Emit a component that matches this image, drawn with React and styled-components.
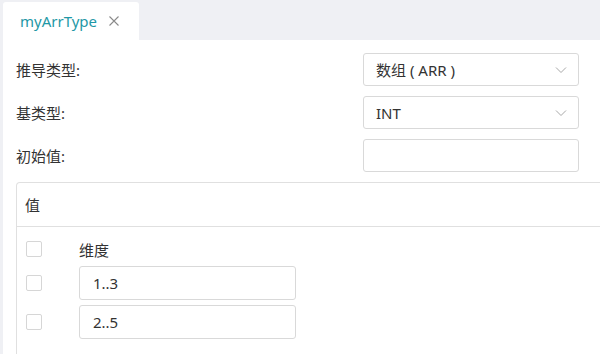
import React from 'react'
import styled, { createGlobalStyle } from 'styled-components'

const GlobalStyle = createGlobalStyle`
	html, body {
		margin: 0;
		padding: 0;
		background: #ffffff;
	}
	body {
		font-family: 'Noto Sans', 'Noto Sans CJK SC', sans-serif;
		color: #333333;
	}
`

const Page = styled.div`
	display: flex;
	width: 600px;
	height: 354px;
	overflow: hidden;
	background: #eff0f4;
`

const Main = styled.div`
	flex: 1;
	margin-left: 3px;
	display: flex;
	flex-direction: column;
	min-width: 0;
`

const TabBar = styled.div`
	height: 40px;
	display: flex;
	align-items: flex-end;
	background: #eff0f4;
`

const Tab = styled.div`
	width: 136px;
	height: 38px;
	box-sizing: border-box;
	background: #ffffff;
	border-radius: 3px 3px 0 0;
	display: flex;
	align-items: center;
	padding-left: 17px;
	gap: 12px;
	font-size: 15px;
	color: #1f98a6;
	padding-bottom: 1px;
`

const CloseButton = styled.span`
	display: flex;
	align-items: center;
	color: #8a8a8a;
`

const Content = styled.div`
	flex: 1;
	background: #ffffff;
	padding: 13px 0 0 13px;
	display: flex;
	flex-direction: column;
	gap: 10px;
`

const FieldRow = styled.div`
	display: flex;
	align-items: center;
	justify-content: space-between;
	padding-right: 21px;
	height: 33px;
`

const Label = styled.span`
	font-size: 15px;
	color: #333333;
`

const Field = styled.div`
	width: 216px;
	height: 33px;
	box-sizing: border-box;
	border: 1px solid #d9d9d9;
	border-radius: 3px;
	display: flex;
	align-items: center;
	justify-content: space-between;
	padding: 0 11px 0 12px;
	font-size: 15px;
	color: #333333;
`

const Panel = styled.div`
	flex: 1;
	margin-right: -20px;
	border: 1px solid #e0e0e0;
	border-radius: 4px 4px 0 0;
	border-bottom: none;
	display: flex;
	flex-direction: column;
`

const PanelHeader = styled.div`
	height: 43px;
	border-bottom: 1px solid #e0e0e0;
	display: flex;
	align-items: center;
	padding-left: 8px;
	font-size: 15px;
`

const PanelBody = styled.div`
	padding: 10px 0 0 9px;
	display: grid;
	grid-template-columns: 16px 217px;
	column-gap: 37px;
	row-gap: 5px;
	align-items: center;
	justify-content: start;
`

const Checkbox = styled.span`
	width: 16px;
	height: 16px;
	box-sizing: border-box;
	border: 1px solid #d6d6d6;
	border-radius: 2px;
	background: #ffffff;
`

const ColumnTitle = styled.span`
	height: 24px;
	display: flex;
	align-items: center;
	font-size: 15px;
`

const ValueInput = styled.div`
	height: 34px;
	box-sizing: border-box;
	border: 1px solid #d9d9d9;
	border-radius: 3px;
	display: flex;
	align-items: center;
	padding-left: 13px;
	font-size: 15px;
	color: #333333;
`

const Chevron = () => (
	<svg width='12' height='8' viewBox='0 0 12 8'>
		<path d='M1 1.5 L6 6.5 L11 1.5' fill='none' stroke='#a8a8a8' strokeWidth='1' />
	</svg>
)

const dims = ['1..3', '2..5']

const App = () => {
	return (
		<>
			<GlobalStyle />
			<Page>
				<Main>
					<TabBar>
						<Tab>
							<span>myArrType</span>
							<CloseButton>
								<svg width='10' height='10' viewBox='0 0 10 10'>
									<path d='M0.5 0.5 L9.5 9.5 M9.5 0.5 L0.5 9.5' stroke='#8a8a8a' strokeWidth='1.1' />
								</svg>
							</CloseButton>
						</Tab>
					</TabBar>
					<Content>
						<FieldRow>
							<Label>推导类型:</Label>
							<Field>
								<span>数组 ( ARR )</span>
								<Chevron />
							</Field>
						</FieldRow>
						<FieldRow>
							<Label>基类型:</Label>
							<Field>
								<span>INT</span>
								<Chevron />
							</Field>
						</FieldRow>
						<FieldRow>
							<Label>初始值:</Label>
							<Field />
						</FieldRow>
						<Panel>
							<PanelHeader>值</PanelHeader>
							<PanelBody>
								<Checkbox />
								<ColumnTitle>维度</ColumnTitle>
								{dims.map(d => (
									<React.Fragment key={d}>
										<Checkbox />
										<ValueInput>{d}</ValueInput>
									</React.Fragment>
								))}
							</PanelBody>
						</Panel>
					</Content>
				</Main>
			</Page>
		</>
	)
}

export default App
